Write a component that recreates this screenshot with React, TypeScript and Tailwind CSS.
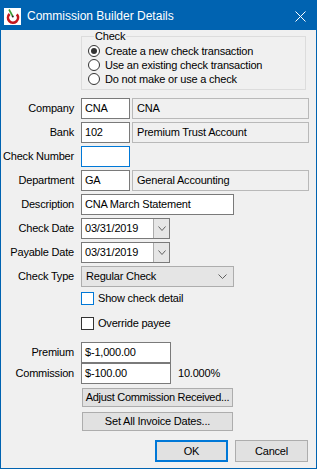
import React from "react";

const font = { fontFamily: '"Liberation Sans", Arial, sans-serif' };

const Chevron: React.FC<{ w?: number }> = ({ w = 9 }) => (
  <svg width={w} height="5" viewBox={`0 0 ${w} 5`}>
    <path d={`M0.5 0.5 L${w / 2} 4.5 L${w - 0.5} 0.5`} fill="none" stroke="#606060" strokeWidth="1" />
  </svg>
);

const Radio: React.FC<{ checked?: boolean; label: string }> = ({ checked, label }) => (
  <div className="flex items-center h-[14px]">
    <span className="w-[12px] h-[12px] rounded-full border border-[#333333] bg-white flex items-center justify-center">
      {checked && <span className="w-[6px] h-[6px] rounded-full bg-[#333333]" />}
    </span>
    <span className="ml-[5px] leading-[13px]">{label}</span>
  </div>
);

const Row: React.FC<{ label?: string; className?: string; children: React.ReactNode }> = ({
  label,
  className = "",
  children,
}) => (
  <div className={`flex items-center h-[21px] ${className}`}>
    <span className="w-[73px] text-right whitespace-nowrap">{label}</span>
    <div className="ml-[7px] flex items-center h-full">{children}</div>
  </div>
);

const TextBox: React.FC<{ value: string; width: string; focused?: boolean }> = ({ value, width, focused }) => (
  <div
    className={`${width} h-[21px] bg-white border ${
      focused ? "border-[#0078d7]" : "border-[#7a7a7a]"
    } flex items-center pl-[3px] whitespace-nowrap`}
  >
    {value}
  </div>
);

const ReadBox: React.FC<{ value: string }> = ({ value }) => (
  <div className="ml-[2px] w-[177px] h-[21px] bg-[#f0f0f0] border border-[#b9b9b9] flex items-center pl-[4px] whitespace-nowrap">
    {value}
  </div>
);

const DateBox: React.FC<{ value: string }> = ({ value }) => (
  <div className="w-[89px] h-[21px] bg-white border border-[#7a7a7a] flex">
    <span className="flex-1 flex items-center pl-[3px]">{value}</span>
    <span className="w-[16px] bg-[#e6e6e6] border-l border-[#acacac] flex items-center justify-center">
      <Chevron w={8} />
    </span>
  </div>
);

const AppIcon = () => (
  <svg width="17" height="17" viewBox="0 0 17 17">
    <rect x="0" y="0" width="17" height="17" fill="#ffffff" />
    <path d="M5.6 6 A5 5 0 1 0 12.8 6.4" fill="none" stroke="#c4161c" strokeWidth="2.6" />
    <path d="M5 1.5 L8.6 8" stroke="#3da23a" strokeWidth="1.6" />
    <circle cx="8.8" cy="8.4" r="1" fill="#222" />
  </svg>
);

export default function App() {
  return (
    <div className="w-[320px] h-[470px] bg-white text-[11px] tracking-[-0.2px] text-black" style={font}>
      <div className="w-[317px] h-[469px] border border-[#0063b1] bg-[#f0f0f0] flex flex-col">
        {/* title bar */}
        <div className="h-[29px] bg-[#0063b1] flex items-center text-white shrink-0">
          <div className="ml-[3px] mt-[1px]">
            <AppIcon />
          </div>
          <span className="ml-[6px] text-[12px] tracking-normal mt-[1px]">Commission Builder Details</span>
          <svg width="11" height="11" viewBox="0 0 11 11" className="ml-auto mr-[10px] mt-[1px]">
            <path d="M0.5 0.5 L10.5 10.5 M10.5 0.5 L0.5 10.5" stroke="#ffffff" strokeWidth="1" />
          </svg>
        </div>

        {/* Check group */}
        <fieldset className="ml-[80px] w-[225px] h-[60px] border border-[#dcdcdc] pl-[6px] pt-[2px]">
          <legend className="ml-[6px] px-[1px] leading-[12px]">Check</legend>
          <Radio checked label="Create a new check transaction" />
          <Radio label="Use an existing check transaction" />
          <Radio label="Do not make or use a check" />
        </fieldset>

        <div className="flex flex-col mt-[8px]">
          <Row label="Company">
            <TextBox value="CNA" width="w-[49px]" />
            <ReadBox value="CNA" />
          </Row>
          <Row label="Bank" className="mt-[3px]">
            <TextBox value="102" width="w-[49px]" />
            <ReadBox value="Premium Trust Account" />
          </Row>
          <Row label="Check Number" className="mt-[3px]">
            <TextBox value="" width="w-[49px]" focused />
          </Row>
          <Row label="Department" className="mt-[3px]">
            <TextBox value="GA" width="w-[49px]" />
            <ReadBox value="General Accounting" />
          </Row>
          <Row label="Description" className="mt-[3px]">
            <TextBox value="CNA March Statement" width="w-[153px]" />
          </Row>
          <Row label="Check Date" className="mt-[3px]">
            <DateBox value="03/31/2019" />
          </Row>
          <Row label="Payable Date" className="mt-[3px]">
            <DateBox value="03/31/2019" />
          </Row>
          <Row label="Check Type" className="mt-[3px]">
            <div className="w-[153px] h-[21px] bg-[#e5e5e5] border border-[#adadad] flex items-center pl-[4px] pr-[6px]">
              <span className="flex-1">Regular Check</span>
              <Chevron />
            </div>
          </Row>

          <div className="flex items-center h-[13px] mt-[5px] ml-[80px]">
            <span className="w-[13px] h-[13px] bg-white border border-[#0078d7]" />
            <span className="ml-[4px]">Show check detail</span>
          </div>
          <div className="flex items-center h-[13px] mt-[12px] ml-[80px]">
            <span className="w-[13px] h-[13px] bg-white border border-[#333333]" />
            <span className="ml-[4px]">Override payee</span>
          </div>

          <Row label="Premium" className="mt-[12px]">
            <TextBox value="$-1,000.00" width="w-[90px]" />
          </Row>
          <Row label="Commission">
            <TextBox value="$-100.00" width="w-[90px]" />
            <span className="ml-[7px]">10.000%</span>
          </Row>

          <button className="ml-[81px] mt-[4px] w-[151px] h-[19px] bg-[#e1e1e1] border border-[#adadad] flex items-center justify-center whitespace-nowrap tracking-[-0.3px]">
            Adjust Commission Received...
          </button>
          <button className="ml-[81px] mt-[5px] w-[151px] h-[19px] bg-[#e1e1e1] border border-[#adadad] flex items-center justify-center whitespace-nowrap">
            Set All Invoice Dates...
          </button>

          <div className="flex justify-end gap-[7px] mr-[8px] mt-[9px]">
            <button className="w-[73px] h-[22px] bg-[#e1e1e1] border-2 border-[#0078d7] flex items-center justify-center">
              OK
            </button>
            <button className="w-[73px] h-[22px] bg-[#e1e1e1] border border-[#adadad] flex items-center justify-center">
              Cancel
            </button>
          </div>
        </div>
      </div>
    </div>
  );
}
